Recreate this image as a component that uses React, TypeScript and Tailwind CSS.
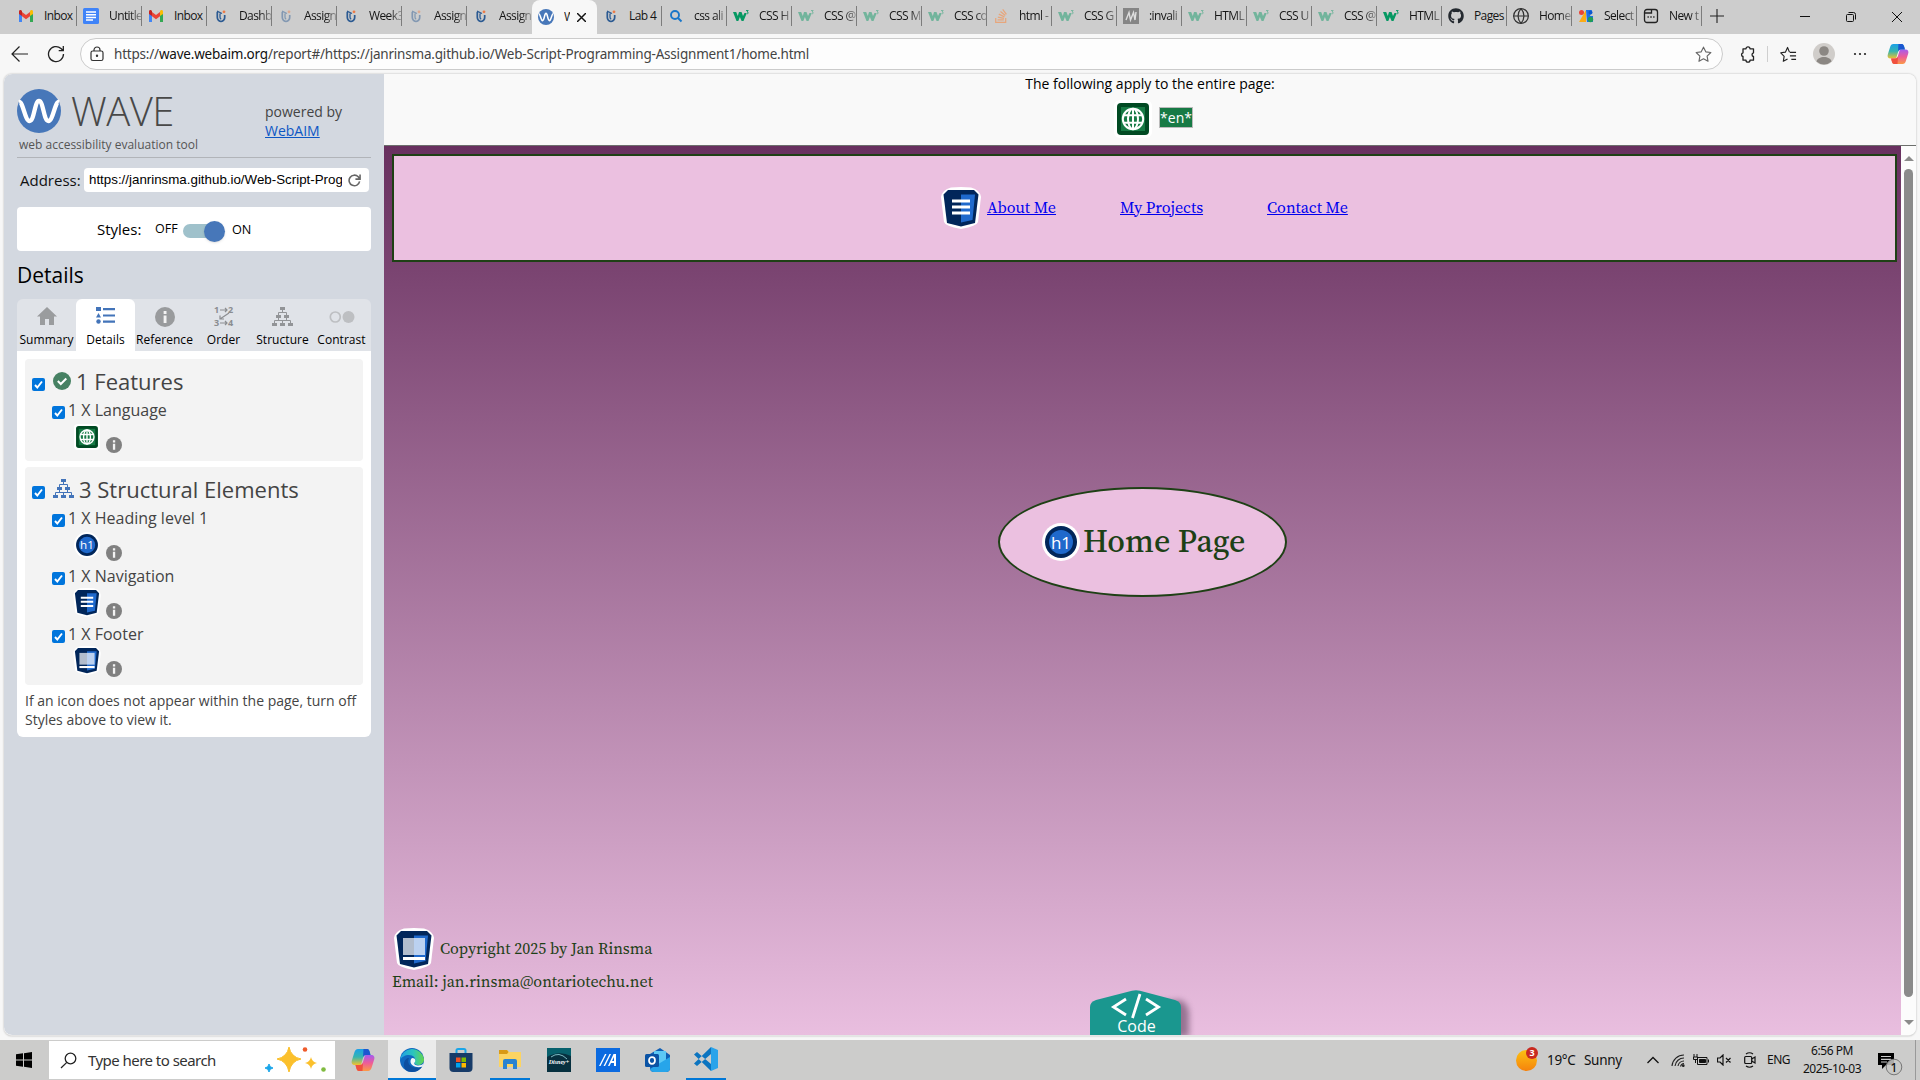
import React from "react";
import { FaGithub, FaStackOverflow } from "react-icons/fa";
import { Globe } from "lucide-react";

const SERIF = "font-['Source_Serif_4','Source_Serif_Pro','Noto_Serif','Liberation_Serif',serif]";

function Favicon({ kind }: { kind: string }) {
  if (kind === "gmail")
    return (
      <svg viewBox="0 0 16 16" className="size-4">
        <path d="M1 3.500V14h3V7z" fill="#4285f4" />
        <path d="M15 3.500V14h-3V7z" fill="#34a853" />
        <path d="M4 4v4.200l4 3 4-3V4L8 7z" fill="#ea4335" />
        <path d="M1 3.500C1 2 3 1.500 4 3v5L1 6z" fill="#c5221f" />
        <path d="M15 3.500C15 2 13 1.500 12 3v5l3-2z" fill="#fbbc04" />
      </svg>
    );
  if (kind === "docs")
    return (
      <svg viewBox="0 0 16 16" className="size-4">
        <rect width="16" height="16" rx="1.500" fill="#3f83f8" />
        <path d="M3 4h10M3 6.700h10M3 9.400h10M3 12h7" stroke="#fff" strokeWidth="1.500" />
      </svg>
    );
  if (kind === "dash" || kind === "dashDim")
    return (
      <svg viewBox="0 0 16 16" className={kind === "dash" ? "size-4" : "size-4 opacity-45"}>
        <path d="M4.300 4v5.200c0 2.300 1.500 3.800 3.700 4.300 2.300-.5 3.700-2 3.700-4.300V7" fill="none" stroke="#2b5a92" strokeWidth="1.700" />
        <path d="M4 3.200l5 2.300M7 5.500v3.700c0 1 .5 1.600 1.200 2" fill="none" stroke="#2b5a92" strokeWidth="1.300" />
        <circle cx="11" cy="3.800" r="1.400" fill="#ee7a45" />
      </svg>
    );
  if (kind === "search")
    return (
      <svg viewBox="0 0 16 16" className="size-4" fill="none" stroke="#1976c9" strokeWidth="1.900">
        <circle cx="7" cy="7" r="4" />
        <path d="M10 10l3.500 3.500" />
      </svg>
    );
  if (kind === "w3" || kind === "w3Dim")
    return (
      <svg viewBox="0 0 16 16" className={kind === "w3" ? "size-4" : "size-4 opacity-45"} fill="none" stroke="#059862">
        <path d="M0 4h3.200l1.600 4L6 4h2.500l1.500 4 1.500-3h1.500v2L10.500 13H8.600L6.900 9 5.300 13H3.500z" fill="#059862" stroke="none" />
        <path d="M13 2.500h2.200L14 4c2 0 1.500 2.300-.8 1.800" strokeWidth=".9" />
      </svg>
    );
  if (kind === "so") return <FaStackOverflow className="size-4 text-[#e7a67c]" />;
  if (kind === "mdn")
    return (
      <svg viewBox="0 0 16 16" className="size-4">
        <rect width="16" height="16" fill="#858585" />
        <path d="M3 12L6 4.500 7.500 12 10.500 4.500 12 12M13 4l-1 8" fill="none" stroke="#ddd" strokeWidth="1.400" />
      </svg>
    );
  if (kind === "github") return <FaGithub className="size-4 text-[#24292f]" />;
  if (kind === "globe") return <Globe className="size-4 scale-110 text-[#333]" strokeWidth={1.700} />;
  if (kind === "select")
    return (
      <svg viewBox="0 0 16 16" className="size-4">
        <circle cx="3.500" cy="4.500" r="2.500" fill="#ea4335" />
        <path d="M1 14L8 2v12z" fill="#fbab16" />
        <path d="M8 2h6l-2 6h3v6H9z" fill="#1e6fe8" />
        <circle cx="12.500" cy="11.500" r="2.700" fill="#1f9d55" />
        <circle cx="12.500" cy="4.500" r="2" fill="#0b57d0" />
      </svg>
    );
  if (kind === "newtab")
    return (
      <svg viewBox="0 0 16 16" className="size-4" fill="none" stroke="#222" strokeWidth="1.300">
        <rect x="1.500" y="1.500" width="13" height="13" rx="2.500" />
        <path d="M2 5h6.500V2M4.500 9h1.300M7.300 9h1.400M10.200 9h1.300" />
      </svg>
    );
  return <WaveMark className="size-4" />;
}

function WaveMark({ className }: { className: string }) {
  return (
    <svg viewBox="0 0 44 44" className={className}>
      <circle cx="22" cy="22" r="22" fill="#4777b9" />
      <path d="M2 13C6 12 8 32 12.500 32c5 0 5-20 9.500-20s4.500 20 9.500 20C36 32 38 12 42 13" fill="none" stroke="#fff" strokeWidth="4.300" />
    </svg>
  );
}

const tabs: [string, string][] = [
  ["gmail", "Inbox"], ["docs", "Untitle"], ["gmail", "Inbox"], ["dash", "Dashb"],
  ["dashDim", "Assign"], ["dash", "Week3"], ["dashDim", "Assign"], ["dash", "Assign"],
  ["wave", "W"], ["dash", "Lab 4"], ["search", "css ali"], ["w3", "CSS H"], ["w3Dim", "CSS @"],
  ["w3Dim", "CSS M"], ["w3Dim", "CSS co"], ["so", "html -"], ["w3Dim", "CSS G"], ["mdn", ":invali"],
  ["w3Dim", "HTML"], ["w3Dim", "CSS U"], ["w3Dim", "CSS @"], ["w3", "HTML"], ["github", "Pages"],
  ["globe", "Home"], ["select", "Select"], ["newtab", "New t"],
];

function TabStrip() {
  return (
    <div className="flex h-[34px] bg-[#cdcdcd] pl-[12px]">
      {tabs.map(([kind, label], i) =>
        kind === "wave" ? (
          <div key={i} className="flex h-[34px] w-[65px] shrink-0 items-center rounded-t-lg bg-[#f7f7f7] pl-[6px]">
            <Favicon kind={kind} />
            <span className="ml-[10px] w-[6px] overflow-hidden text-[12px] text-[#222]">{label}</span>
            <svg viewBox="0 0 10 10" className="ml-[7px] size-[9px]" stroke="#111" strokeWidth="1.600">
              <path d="M0 0l10 10M10 0L0 10" />
            </svg>
          </div>
        ) : (
          <div key={i} className="flex h-[32px] w-[65px] shrink-0 items-center pl-[6px]">
            <Favicon kind={kind} />
            <span className={label === "Pages" || label === "Inbox" || label === "Lab 4" ? "ml-[10px] w-[32px] whitespace-nowrap text-[12px] tracking-[-0.6px] text-[#151515]" : "ml-[10px] w-[32px] whitespace-nowrap text-[12px] tracking-[-0.6px] text-[#151515] [mask-image:linear-gradient(to_right,#000_65%,transparent_115%)]"}>{label}</span>
            <span className={i === 7 ? "h-5 w-px" : "h-5 w-px bg-[#7c7c7c]"} />
          </div>
        )
      )}
      <svg viewBox="0 0 14 14" className="ml-[8px] mt-[9px] size-[14px]" stroke="#222" strokeWidth="1.100"><path d="M7 0v14M0 7h14" /></svg>
      <div className="ml-auto mr-[18px] mt-[12px] flex gap-[36px]">
        <svg viewBox="0 0 10 10" className="size-[10px]" stroke="#111" fill="none"><path d="M0 4.500h10" /></svg>
        <svg viewBox="0 0 10 10" className="size-[10px]" stroke="#111" fill="none"><rect x=".5" y="2.500" width="7" height="7" rx="1" /><path d="M2.500 .5h5a2 2 0 0 1 2 2v5" /></svg>
        <svg viewBox="0 0 10 10" className="size-[10px]" stroke="#111" fill="none"><path d="M0 0l10 10M10 0L0 10" /></svg>
      </div>
    </div>
  );
}

function CopilotIcon({ id, className }: { id: string; className: string }) {
  return (
    <svg viewBox="0 0 24 24" className={className}>
      <defs>
        <linearGradient id={id + "a"} x1="0" y1="0" x2="0" y2="1">
          <stop offset="0" stopColor="#1ba0e8" /><stop offset=".5" stopColor="#35b5b0" /><stop offset="1" stopColor="#f2c22c" />
        </linearGradient>
        <linearGradient id={id + "b"} x1="0" y1="0" x2="0" y2="1">
          <stop offset="0" stopColor="#a45bf0" /><stop offset=".5" stopColor="#ee5c98" /><stop offset="1" stopColor="#fb9a45" />
        </linearGradient>
      </defs>
      <path d="M7 1h9c2 0 2.500 2 3 4l.5 2h-4c-2 0-3 1-3.500 3l-2 7H4c-3 0-4-2-3-5l2.500-8C4 2.500 5 1 7 1z" fill={`url(#${id}a)`} />
      <path d="M17 23H8c-2 0-2.500-2-3-4l-.5-2h4c2 0 3-1 3.500-3l2-7H20c3 0 4 2 3 5l-2.500 8c-.5 1.500-1.500 3-3.500 3z" fill={`url(#${id}b)`} />
      <path d="M12.500 1h3.500c2 0 2.500 2 3 4l.5 2h-4c-2 0-3 .5-3.500 2.500z" fill="#1b57d0" />
      <path d="M11.500 23H8c-2 0-2.500-2-3-4l-.5-2h4c2 0 3-.5 3.500-2.500z" fill="#f0503e" />
    </svg>
  );
}

function Toolbar() {
  return (
    <div className="flex h-[40px] items-center bg-[#f7f7f7] pl-[11px]">
      <svg viewBox="0 0 18 18" className="size-[18px]" fill="none" stroke="#222" strokeWidth="1.200"><path d="M17 9H1.500M8.500 1.500L1 9l7.500 7.500" /></svg>
      <svg viewBox="0 0 18 18" className="ml-[18px] size-[18px]" fill="none" stroke="#222" strokeWidth="1.300"><path d="M16.500 9A7.500 7.500 0 1 1 14 3.500l2 2M16.300 1v4.700h-4.600" /></svg>
      <div className="ml-[15px] flex h-[32px] w-[1643px] items-center rounded-full border border-[#cbcbcb] bg-[#fdfdfd] pl-[9px] pr-[10px]">
        <svg viewBox="0 0 14 16" className="h-[16px] w-[14px]" fill="none" stroke="#333" strokeWidth="1.200">
          <rect x="1" y="5" width="12" height="9.500" rx="1.800" /><path d="M4 5V4a3 3 0 0 1 6 0v1" /><circle cx="7" cy="9.700" r=".6" fill="#333" />
        </svg>
        <span className="ml-[10px] font-['Noto_Sans',sans-serif] text-[13.500px] tracking-[-0.2px] text-[#444]">https://<span className="text-[#111]">wave.webaim.org</span>/report#/https://janrinsma.github.io/Web-Script-Programming-Assignment1/home.html</span>
        <svg viewBox="0 0 18 18" className="ml-auto size-[17px]" fill="none" stroke="#666" strokeWidth="1.200" strokeLinejoin="round"><path d="M9 1.200l2.400 5 5.400.7-4 3.800 1 5.500L9 13.600l-4.800 2.600 1-5.500-4-3.800 5.400-.7z" /></svg>
      </div>
      <svg viewBox="0 0 17 17" className="ml-[16px] size-[17px]" fill="none" stroke="#222" strokeWidth="1.300" strokeLinejoin="round">
        <path d="M4 2.800h3a2 2 0 0 1 4 0h3.500v4a1.900 1.900 0 0 0 0 3.700v3.700H11a2 2 0 0 1-4 0H4v-3.700a1.900 1.900 0 0 1 0-3.700z" />
      </svg>
      <span className="ml-[11px] h-4 w-px bg-[#cfcfcf]" />
      <svg viewBox="0 0 18 18" className="ml-[12px] size-[17px]" fill="none" stroke="#222" strokeWidth="1.200" strokeLinejoin="round"><path d="M10 6.500L8 1.500l-2.300 5-4.900.7 3.600 3.700-.9 5.300L8 13.700M10.500 6.800H17M10.500 10.500H17M12 14.200h5" /></svg>
      <svg viewBox="0 0 22 22" className="ml-[16px] size-[22px]">
        <circle cx="11" cy="11" r="11" fill="#d0cdca" /><circle cx="11" cy="8" r="4.800" fill="#8b8783" /><path d="M3.500 18.500c1-6 14-6 15 0a11 11 0 0 1-15 0z" fill="#8b8783" />
      </svg>
      <svg viewBox="0 0 14 4" className="ml-[18px] h-[4px] w-[14px]" fill="#222"><circle cx="2" cy="2" r="1.100" /><circle cx="7" cy="2" r="1.100" /><circle cx="12" cy="2" r="1.100" /></svg>
      <CopilotIcon id="tb" className="ml-[20px] size-[22px]" />
    </div>
  );
}

function StructureIcon({ className }: { className: string }) {
  return (
    <svg viewBox="0 0 21 19" className={className} fill="currentColor">
      <path d="M8 0h5v3H8zM4 8h5v3H4zM12 8h5v3h-5zM0 16h5v3H0zM8 16h5v3H8zM16 16h5v3h-5z" />
      <path d="M10.500 3v2.500M6.500 8V5.500h8V8M6.500 11v2.500M14.500 11v2.500M2.500 16v-2.500h16V16M10.500 13.500V16" fill="none" stroke="currentColor" />
    </svg>
  );
}

function InfoIcon({ className }: { className: string }) {
  return (
    <svg viewBox="0 0 16 16" className={className}>
      <circle cx="8" cy="8" r="8" fill="currentColor" />
      <path d="M6.900 3.200h2.300v2.300H6.900zM6.900 6.700h2.300v6H6.900z" fill="#f3f3f3" />
    </svg>
  );
}

function CheckBox() {
  return (
    <svg viewBox="0 0 13 13" className="size-[13px] shrink-0"><rect width="13" height="13" rx="2" fill="#0075dc" /><path d="M3 7l2.300 2.500L10 3.500" fill="none" stroke="#fff" strokeWidth="1.900" /></svg>
  );
}

function WaveIcon({ kind, className }: { kind: string; className: string }) {
  if (kind === "lang")
    return (
      <svg viewBox="0 0 38 38" className={className}>
        <rect width="38" height="38" rx="6" fill="#fff" />
        <rect x="3" y="3" width="32" height="32" rx="4" fill="#014a23" />
        <rect x="7" y="7" width="24" height="24" fill="#177a45" />
        <g fill="none" stroke="#fff" strokeWidth="2"><circle cx="19" cy="19" r="10.200" /><ellipse cx="19" cy="19" rx="5" ry="10.200" /><path d="M19 9v20M10 15.300h18M10 22.700h18" /></g>
      </svg>
    );
  if (kind === "h1")
    return (
      <svg viewBox="0 0 38 38" className={className}>
        <circle cx="19" cy="19" r="19" fill="#fff" /><circle cx="19" cy="19" r="16" fill="#01265a" /><circle cx="19" cy="19" r="12" fill="#1f69cc" />
        <text x="19" y="25.500" textAnchor="middle" fontSize="17" fill="#fff" fontFamily="Open Sans, sans-serif">h1</text>
      </svg>
    );
  return (
    <svg viewBox="0 0 40 42" className={className}>
      <path d="M10 .5Q20-.5 30 .5Q39 3 40 10L37 35Q36 39 20 42Q4 39 3 35L0 10Q1 3 10 .5z" fill="#fff" />
      <path d="M7 3h26l4.500 4.500L34 36l-14 3.500L6 36 2.500 7.500z" fill="#01265a" />
      <path d="M20 7.500h14L31.500 33 20 35.500z" fill="#1f69cc" />
      {kind === "nav" ? (
        <path d="M11 14h18M11 20h18M11 26h18" stroke="#fff" strokeWidth="3" />
      ) : (
        <>
          <path d="M9 10h11v17H9z" fill="#b2bdcd" /><path d="M20 10h11v17H20z" fill="#bbd1f0" /><path d="M9 30.500h22" stroke="#fff" strokeWidth="3" />
        </>
      )}
    </svg>
  );
}

function DetailItem({ label, kind }: { label: string; kind: string }) {
  const wide = kind === "nav" || kind === "footer";
  return (
    <div className="h-[58px] pl-[27px]">
      <div className="flex h-[28px] items-start">
        <div className="pt-[10px]"><CheckBox /></div>
        <span className="ml-[3px] text-[16px] leading-[28px]">{label}</span>
      </div>
      <div className="flex items-start">
        <WaveIcon kind={kind} className={wide ? "-mt-[2px] ml-[21px] h-[29px] w-[28px]" : "ml-[22px] size-[26px]"} />
        <InfoIcon className={wide ? "ml-[5px] mt-[13px] size-4 text-[#808080]" : "ml-[6px] mt-[13px] size-4 text-[#808080]"} />
      </div>
    </div>
  );
}

const panelTabs = ["Summary", "Details", "Reference", "Order", "Structure", "Contrast"];

function PanelTabIcon({ name }: { name: string }) {
  if (name === "Summary")
    return (
      <svg viewBox="0 0 20 18" className="-mt-[2px] h-[18px] w-[20px]" fill="#9a9c9e"><path d="M10 0L20 9.500h-3V18h-5v-6H8v6H3V9.500H0z" /></svg>
    );
  if (name === "Details")
    return (
      <svg viewBox="0 0 19 17" className="-mt-[3px] h-[17px] w-[19px]" fill="#4374b9"><path d="M0 0h5v4H0zM2.500 6L5 10.500H0zM7 1h12v2.200H7zM7 7.400h12v2.200H7zM7 13.600h12v2.200H7z" /><circle cx="2.500" cy="14.500" r="2.200" /></svg>
    );
  if (name === "Reference") return <InfoIcon className="size-[20px] text-[#999b9d]" />;
  if (name === "Order")
    return (
      <svg viewBox="0 0 20 20" className="-mt-[2px] size-[20px] overflow-visible" fill="none" stroke="#8b8d90" strokeWidth="1.200">
        <g fill="#8b8d90" stroke="none" fontSize="9" fontWeight="700" fontFamily="Open Sans, sans-serif"><text x="0" y="7">1</text><text x="14" y="7">2</text><text x="0" y="20">3</text><text x="14" y="20">4</text></g>
        <path d="M6 4h7M11 2l2 2-2 2M15 7l-9 6M6 9.500V13h4M6 17h7M11 15l2 2-2 2" />
      </svg>
    );
  if (name === "Structure") return <StructureIcon className="h-[19px] w-[21px] text-[#929497]" />;
  return (
    <svg viewBox="0 0 26 12" className="h-[12px] w-[26px]"><circle cx="6.300" cy="6" r="5" fill="none" stroke="#bdbfc2" strokeWidth="1.700" /><circle cx="19.500" cy="6" r="6" fill="#bdbfc2" /></svg>
  );
}

function Sidebar() {
  return (
    <aside className="h-full w-[380px] shrink-0 rounded-l-lg bg-[#d3d8e0] pl-[13px] pr-[13px] pt-[15px] text-[#444]">
      <div className="flex h-[69px] border-b border-[#b1b4b9]">
        <div className="w-[248px]">
          <div className="flex h-[44px] items-center">
            <WaveMark className="size-[44px]" />
            <span className="ml-[10px] text-[40px] font-light leading-[46px] tracking-[-0.5px] text-[#484848]">WAVE</span>
          </div>
          <div className="pl-[2px] text-[12px] leading-[24px] text-[#555]">web accessibility evaluation tool</div>
        </div>
        <div className="pt-[13px] text-[14px] leading-[19px]">powered by<br /><span className="text-[#0d57c4] underline">WebAIM</span></div>
      </div>
      <div className="mt-[10px] flex h-[24px] items-center">
        <span className="w-[67px] whitespace-nowrap pl-[3px] text-[15px] text-[#111]">Address:</span>
        <div className="flex h-[24px] w-[285px] items-center rounded bg-white pl-[5px]">
          <span className="w-[253px] overflow-hidden whitespace-nowrap font-['Liberation_Sans',sans-serif] text-[13.333px] text-black">https://janrinsma.github.io/Web-Script-Prog</span>
          <svg viewBox="0 0 14 14" className="ml-[6px] size-[13px]" fill="none" stroke="#666" strokeWidth="1.700"><path d="M12.500 8A5.700 5.700 0 1 1 11 3l1.500 2M13 .5v5H8" /></svg>
        </div>
      </div>
      <div className="mt-[15px] flex h-[44px] w-[354px] items-center rounded bg-white pl-[80px] text-black">
        <span className="w-[58px] pt-px text-[15px]">Styles:</span>
        <span className="w-[28px] pt-px text-[12.500px]">OFF</span>
        <div className="mt-[4px] flex h-[14px] w-[41px] items-center justify-end rounded-full bg-[#9fc1cb]"><span className="-mr-px size-[21px] shrink-0 rounded-full bg-[#4777b9] shadow" /></div>
        <span className="ml-[8px] pt-px text-[12.700px]">ON</span>
      </div>
      <h2 className="mt-[8px] h-[32px] text-[21px] leading-[32px] text-black">Details</h2>
      <div className="mt-[8px] flex h-[52px] w-[354px] rounded-t-md bg-[#e0e3e8] text-black">
        {panelTabs.map((t) => (
          <div key={t} className={t === "Details" ? "flex w-[59px] flex-col items-center rounded-t-md bg-white" : "flex w-[59px] flex-col items-center"}>
            <div className="flex h-[32px] items-center pt-[3px]"><PanelTabIcon name={t} /></div>
            <span className="whitespace-nowrap text-[12px] leading-[17px] tracking-[0.05px]">{t}</span>
          </div>
        ))}
      </div>
      <div className="flex h-[386px] w-[354px] flex-col rounded-b-md bg-white px-[8px] pt-[8px]">
        <section className="h-[102px] rounded bg-[#f3f3f3]">
          <div className="flex h-[37px] items-center pl-[7px]">
            <div className="pt-[14px]"><CheckBox /></div>
            <svg viewBox="0 0 18 18" className="ml-[8px] mt-[7px] size-[18px]"><circle cx="9" cy="9" r="9" fill="#478163" /><path d="M4.800 9l3 3 5.500-5.500" fill="none" stroke="#fff" strokeWidth="2" /></svg>
            <span className="ml-[5px] mt-[6px] text-[22px] leading-none">1 Features</span>
          </div>
          <DetailItem label="1 X Language" kind="lang" />
        </section>
        <section className="mt-[6px] h-[218px] rounded bg-[#f3f3f3]">
          <div className="flex h-[37px] items-center pl-[7px]">
            <div className="pt-[14px]"><CheckBox /></div>
            <StructureIcon className="ml-[8px] mt-[6px] h-[19px] w-[21px] text-[#4374b9]" />
            <span className="ml-[5px] mt-[6px] whitespace-nowrap text-[22px] leading-none">3 Structural Elements</span>
          </div>
          <DetailItem label="1 X Heading level 1" kind="h1" />
          <DetailItem label="1 X Navigation" kind="nav" />
          <DetailItem label="1 X Footer" kind="footer" />
        </section>
        <p className="mt-[6px] whitespace-nowrap text-[14px] leading-[19px]">If an icon does not appear within the page, turn off<br />Styles above to view it.</p>
      </div>
    </aside>
  );
}

function PageView() {
  return (
    <main className="flex h-full min-w-0 flex-1 flex-col">
      <div className="h-[72px] border-b border-[#6c6f6c] bg-[#f9f9f9] text-center text-[14px] text-black">
        <p className="h-[26px] leading-[19px]">The following apply to the entire page:</p>
        <div className="flex items-start pl-[730px]">
          <WaveIcon kind="lang" className="size-[38px]" />
          <span className="ml-[7px] mt-[7px] h-[21px] w-[34px] border border-[#bbb] bg-[#177a45] text-[14px] leading-[19px] text-white">*en*</span>
        </div>
      </div>
      <div className="flex flex-1">
        <div className={`relative flex w-[1517px] flex-col bg-[linear-gradient(#68305f,#e9bedf)] text-[#1d4016] ${SERIF}`}>
          <nav className="ml-[8px] mt-[8px] flex h-[108px] w-[1505px] shrink-0 items-center border-2 border-[#1e4015] bg-[#ebc0e0] pl-[547px] text-[16px] text-[#0000ee]">
            <WaveIcon kind="nav" className="h-[42px] w-[40px]" />
            <a className="mb-[2px] ml-[6px] w-[133px] underline">About Me</a>
            <a className="mb-[2px] w-[147px] underline">My Projects</a>
            <a className="mb-[2px] underline">Contact Me</a>
          </nav>
          <h1 className="ml-[614px] mt-[225px] flex h-[110px] w-[289px] items-center rounded-[50%] border-2 border-[#1e4015] bg-[#ebc0e0] pl-[42px] text-[32px] font-medium">
            <WaveIcon kind="h1" className="mr-[3px] size-[38px] shrink-0" />
            <span className="mb-[3px] whitespace-nowrap">Home Page</span>
          </h1>
          <footer className="ml-[8px] mt-[331px] text-[16px]">
            <div className="flex h-[42px] items-center gap-[6px] pl-[2px]"><WaveIcon kind="footer" className="h-[42px] w-[40px]" /><span className="pb-[3px]">Copyright 2025 by Jan Rinsma</span></div>
            <div className="leading-[23px]">Email: jan.rinsma@ontariotechu.net</div>
          </footer>
          <div className="absolute left-[706px] top-[844px] h-[46px] w-[110px] overflow-hidden">
            <svg viewBox="0 0 110 46" className="h-[46px] w-[110px]">
              <path d="M6 18L90 10q9 3 9 15v22H6z" fill="#6b4b68" opacity=".65" className="blur-[3px]" />
              <path d="M0 50V17q0-5 6-7L42 .8q4-1 8 0L85 10q6 2 6 7v33z" fill="#1a978f" />
              <path d="M36 9L23.500 17 36 25M56 9l12.500 8L56 25M50 4L42.500 28" stroke="#fff" strokeWidth="2.800" fill="none" />
              <text x="46.500" y="42" textAnchor="middle" fontSize="16" fill="#fff" fontFamily="Open Sans, sans-serif">Code</text>
            </svg>
          </div>
        </div>
        <div className="flex w-[15px] flex-col items-center bg-[#fcfcfc] pt-[10px]">
          <svg viewBox="0 0 10 5" className="h-[5px] w-[10px]" fill="#8b8b8b"><path d="M5 0l5 5H0z" /></svg>
          <span className="mt-[8px] h-[828px] w-[9px] rounded-full bg-[#8b8b8b]" />
          <svg viewBox="0 0 10 5" className="mt-[23px] h-[5px] w-[10px]" fill="#8b8b8b"><path d="M5 5l5-5H0z" /></svg>
        </div>
      </div>
    </main>
  );
}

function Taskbar() {
  return (
    <div className="flex h-[40px] items-center bg-[#cccccb] pl-[16px] font-['Noto_Sans',sans-serif] text-[#111]">
      <svg viewBox="0 0 16 16" className="size-4"><path d="M0 2.300l7-1v6.200H0zM8 1.200L16 0v7.500H8zM0 8.500h7v6.200l-7-1zM8 8.500h8V16l-8-1.200z" /></svg>
      <div className="ml-[17px] flex h-[38px] w-[286px] items-center bg-white">
        <svg viewBox="0 0 17 17" className="ml-[11px] size-[17px]" fill="none" stroke="#222" strokeWidth="1.300"><circle cx="10.500" cy="6.500" r="5.300" /><path d="M6.800 10.400L1 16" /></svg>
        <span className="ml-[11px] w-[177px] whitespace-nowrap text-[15px] tracking-[-0.54px] text-[#333]">Type here to search</span>
        <svg viewBox="0 0 62 26" className="h-[26px] w-[62px]">
          <path d="M24 0q2 10 12 12-10 2-12 13-2-11-12-13 10-2 12-12z" fill="#fbc02c" stroke="#fbc02c" />
          <path d="M46 10q1 5 6 6-5 1-6 6-1-5-6-6 5-1 6-6z" fill="#fbc02c" />
          <path d="M4 17q.5 3.500 4 4-3.500.5-4 4-.5-3.500-4-4 3.500-.5 4-4z" fill="#18a5ea" stroke="#18a5ea" />
          <circle cx="40" cy="2.500" r="2.300" fill="#ef5b2b" /><circle cx="58.500" cy="22.500" r="2.300" fill="#80bb40" />
        </svg>
      </div>
      <CopilotIcon id="tk" className="ml-[16px] size-[24px]" />
      <div className="ml-[13px] flex h-full w-[48px] items-center justify-center border-b-2 border-[#0078d7] bg-[#ebebeb]">
        <svg viewBox="0 0 24 24" className="mt-[2px] size-[24px]">
          <defs><linearGradient id="edge" x1="0" x2="1"><stop offset="0" stopColor="#209fe4" /><stop offset=".55" stopColor="#2bc4be" /><stop offset="1" stopColor="#66d64b" /></linearGradient></defs>
          <circle cx="12" cy="12" r="12" fill="#1068c0" />
          <path d="M.2 12A12 12 0 0 1 24 11c0 4-3 6-6 6-2 0-4-1-3.500-2.500C17 10 13 7 9 7 5 7 1.500 9 .2 12z" fill="url(#edge)" />
          <path d="M9 10c-3 6 3 12 13 9-2 3-6 5-10 5C7 24 3 21 4 15c.5-3 2.500-5 5-5z" fill="#0d4fa0" />
          <path d="M12.500 10c3 0 3.500 3 2 4.500-1 2 1 3 4 3 2 0 4-1 5-2l-1 3c-6 2-12-1-12-5 0-2 1-3.500 2-3.500z" fill="#f2f6f8" />
        </svg>
      </div>
      <svg viewBox="0 0 23 24" className="ml-[13px] size-[24px]">
        <path d="M7 6V2.500Q7 1 8.500 1h6Q16 1 16 2.500V6" fill="none" stroke="#1ba5e8" strokeWidth="2" />
        <path d="M0 5h23v15q0 4-4 4H4q-4 0-4-4z" fill="#173b68" />
        <path d="M6.500 9.500h4.500V14H6.500z" fill="#f25022" /><path d="M12 9.500h4.500V14H12z" fill="#7fba00" /><path d="M6.500 15h4.500v4.500H6.500z" fill="#00a4ef" /><path d="M12 15h4.500v4.500H12z" fill="#ffb900" />
      </svg>
      <div className="ml-[17px] flex h-full w-[40px] items-center border-b-2 border-[#0078d7] pl-[9px]">
        <svg viewBox="0 0 22 20" className="size-[22px]"><path d="M0 1h8l2 2h12v15H0z" fill="#fcd462" /><path d="M0 1h8l1.500 2L8 5H0z" fill="#d99a15" /><path d="M4 12q0-2 2-2h10q2 0 2 2v8h-4v-5H8v5H4z" fill="#2a83d0" /></svg>
      </div>
      <svg viewBox="0 0 24 24" className="ml-[17px] size-[24px]">
        <rect width="24" height="24" fill="#07303f" /><path d="M0 0h24v8Q12 2 0 9z" fill="#08616d" />
        <path d="M4 9q8-6 16 2" fill="none" stroke="#9ae0e6" strokeWidth=".8" />
        <text x="12" y="15.500" textAnchor="middle" fontSize="6" fontStyle="italic" fontWeight="700" fill="#fff" fontFamily="Liberation Serif, serif">Disney+</text>
      </svg>
      <svg viewBox="0 0 24 24" className="ml-[25px] size-[24px]"><rect width="24" height="24" fill="#0b6ae0" /><path d="M3 18L9 6h1.500l-6 12zM7.500 18l6-12H15L9 18zM12 18l5.500-12H20v12h-2v-3h-3l-1.500 3zM16 13h2V9z" fill="#fff" /></svg>
      <svg viewBox="0 0 25 24" className="ml-[25px] h-[24px] w-[25px]">
        <path d="M5 6L15 0l10 7v13q0 4-4 4H9q-4 0-4-4z" fill="#0f5fb5" /><path d="M9 3h12v10l-6 4-6-4z" fill="#5cc8f5" /><path d="M5 21L25 9v11q0 4-4 4H9q-3 0-4-3z" fill="#27a5ea" />
        <rect y="6" width="14" height="13" rx="1.500" fill="#0a53a5" /><ellipse cx="7" cy="12.500" rx="3" ry="3.300" fill="none" stroke="#fff" strokeWidth="1.700" />
      </svg>
      <div className="ml-[16px] flex h-full w-[40px] items-center justify-center border-b-2 border-[#0078d7]">
        <svg viewBox="0 0 24 24" className="size-[24px]"><path d="M17 0l7 3v18l-7 3z" fill="#29a3ea" /><path d="M17 0v7L3 19l-3-2.500zM17 24v-7L3 5 0 7.500z" fill="#0b74c0" /></svg>
      </div>
      <div className="relative ml-auto size-[21px] rounded-full bg-linear-to-b from-[#fbc112] to-[#f5820d]">
        <span className="absolute -top-[3px] left-[10px] size-[12px] rounded-full bg-[#c92a20] text-center text-[9px] font-bold leading-[12px] text-white">3</span>
      </div>
      <span className="ml-[10px] w-[37px] text-[13.500px] tracking-[-0.3px]">19°C</span>
      <span className="w-[63px] text-[13.500px] tracking-[-0.3px]">Sunny</span>
      <svg viewBox="0 0 12 8" className="h-[8px] w-[12px]" fill="none" stroke="#111" strokeWidth="1.300"><path d="M.5 7L6 1.500 11.500 7" /></svg>
      <svg viewBox="0 0 14 14" className="ml-[12px] size-[14px]" fill="none" stroke="#222" strokeWidth="1.100"><path d="M1 13A12 12 0 0 1 13 2M4 13a9 9 0 0 1 9-8M7 13a6 6 0 0 1 6-5M9.500 13.500A4 4 0 0 1 13 10.500" /><circle cx="12.300" cy="12.700" r=".8" fill="#111" /></svg>
      <svg viewBox="0 0 16 12" className="ml-[8px] h-[12px] w-[16px]" fill="none" stroke="#111"><path d="M4.500 3.500h9.500v7H4.500zM15.500 5.500v3M1 0v3M4 0v3M.5 3h4v2.500h-4zM2.500 5.500V9" /><path d="M6.500 5.500h6v3h-6z" fill="#111" /></svg>
      <svg viewBox="0 0 15 12" className="ml-[8px] h-[12px] w-[15px]" fill="none" stroke="#111" strokeWidth="1.200"><path d="M.5 4h2.500L6 1v10L3 8H.5zM9 4l4.500 4.500M13.500 4L9 8.500" /></svg>
      <svg viewBox="0 0 12 16" className="ml-[12px] h-[16px] w-[12px]" fill="none" stroke="#111" strokeWidth="1.200"><rect x=".7" y="4.500" width="7" height="7" rx="1" /><path d="M7.700 7L11 5v6L7.700 9M2 2Q5.500-.5 9 2M2 14q3.500 2.500 7 0" /></svg>
      <span className="ml-[11px] w-[29px] text-[12px] tracking-[-0.5px]">ENG</span>
      <div className="w-[72px] text-center text-[12px] leading-[18px] tracking-[-0.45px]">6:56 PM<br />2025-10-03</div>
      <svg viewBox="0 0 26 26" className="ml-[9px] mr-[12px] mt-[6px] size-[26px]">
        <path d="M1 3h16v12H9l-4 4v-4H1z" fill="#000" /><path d="M4 6.500h10M4 9.300h10M4 12h6" stroke="#ccc" strokeWidth="1.200" />
        <circle cx="17" cy="17" r="7.800" fill="#c8c8c7" fillOpacity=".85" stroke="#777" /><text x="17" y="21.500" textAnchor="middle" fontSize="12" fontWeight="500" fill="#111" fontFamily="Noto Sans, sans-serif">1</text>
      </svg>
      <span className="mr-[4px] h-full w-px bg-[#999]" />
    </div>
  );
}

export default function App() {
  return (
    <div className="flex h-[1080px] w-[1920px] flex-col overflow-hidden bg-[#f7f7f7] font-['Open_Sans',sans-serif]">
      <TabStrip />
      <Toolbar />
      <div className="mx-[4px] mb-[4px] flex h-[962px] overflow-hidden rounded-lg border-b border-[#e5e5e5] bg-white shadow-[0_0_2px_#aaa]">
        <Sidebar />
        <PageView />
      </div>
      <Taskbar />
    </div>
  );
}
